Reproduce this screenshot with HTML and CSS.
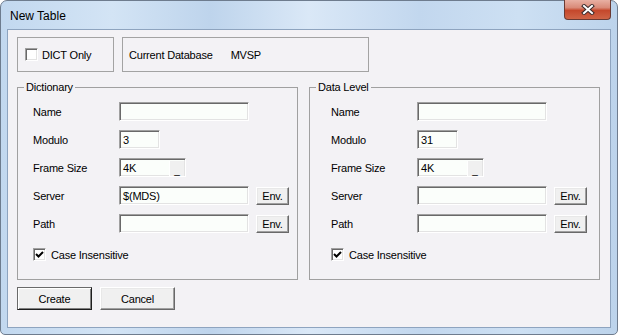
FILE: index.html
```html
<!DOCTYPE html>
<html lang="en">
<head>
    <meta charset="UTF-8">
    <meta name="viewport" content="width=device-width, initial-scale=1.0">
    <title>New Table</title>
    <link rel="stylesheet" href="styles.css">
</head>
<body>
    <div class="window">
        <!-- Title bar -->
        <div class="titlebar">
            <span class="title">New Table</span>
            <span class="close">
                <svg width="14" height="11" viewBox="0 0 14 11">
                    <path d="M3 2 L11 9 M11 2 L3 9" stroke="#3a2a2a" stroke-width="4" stroke-linecap="square"/>
                    <path d="M3 2 L11 9 M11 2 L3 9" stroke="#ffffff" stroke-width="2" stroke-linecap="square"/>
                </svg>
            </span>
        </div>

        <div class="client">
            <div class="top-row">
                <div class="box dict-box">
                    <label class="check"><span class="checkbox"></span>DICT Only</label>
                </div>
                <div class="box db-box">
                    <span>Current Database</span>
                    <span>MVSP</span>
                </div>
            </div>

            <div class="groups">
                <fieldset class="group group-dict">
                    <legend>Dictionary</legend>
                    <div class="rows rows-dict">
                        <div class="row"><span class="label">Name</span><span class="field field-wide"></span></div>
                        <div class="row"><span class="label">Modulo</span><span class="field field-short">3</span></div>
                        <div class="row"><span class="label">Frame Size</span><span class="field field-frame">4K<span class="drop">_</span></span></div>
                        <div class="row"><span class="label">Server</span><span class="field field-wide">$(MDS)</span><span class="btn env">Env.</span></div>
                        <div class="row"><span class="label">Path</span><span class="field field-wide"></span><span class="btn env">Env.</span></div>
                        <label class="check check-row"><span class="checkbox checked">
                            <svg width="9" height="9" viewBox="0 0 9 9"><path d="M1 4 L3.5 6.5 L8 2" stroke="#000" stroke-width="2" fill="none"/></svg>
                        </span>Case Insensitive</label>
                    </div>
                </fieldset>

                <fieldset class="group group-data">
                    <legend>Data Level</legend>
                    <div class="rows rows-data">
                        <div class="row"><span class="label">Name</span><span class="field field-wide"></span></div>
                        <div class="row"><span class="label">Modulo</span><span class="field field-short">31</span></div>
                        <div class="row"><span class="label">Frame Size</span><span class="field field-frame">4K<span class="drop">_</span></span></div>
                        <div class="row"><span class="label">Server</span><span class="field field-wide"></span><span class="btn env">Env.</span></div>
                        <div class="row"><span class="label">Path</span><span class="field field-wide"></span><span class="btn env">Env.</span></div>
                        <label class="check check-row"><span class="checkbox checked">
                            <svg width="9" height="9" viewBox="0 0 9 9"><path d="M1 4 L3.5 6.5 L8 2" stroke="#000" stroke-width="2" fill="none"/></svg>
                        </span>Case Insensitive</label>
                    </div>
                </fieldset>
            </div>

            <div class="buttons">
                <span class="btn action btn-default">Create</span>
                <span class="btn action">Cancel</span>
            </div>
        </div>
    </div>
</body>
</html>
```

FILE: styles.css
```css
/* Page */
body {
    margin: 0;
    background-color: #ffffff;
    font-family: "Liberation Sans", Arial, sans-serif;
    font-size: 11px;
    letter-spacing: -0.2px;
    color: #000;
}

/* Window frame */
.window {
    width: 618px;
    height: 335px;
    box-sizing: border-box;
    border: 1px solid #6e7c8e;
    border-radius: 7px 7px 5px 5px;
    background: linear-gradient(to right, #c2d8ef 0%, #d3e4f5 18%, #bed4ec 34%, #dae8f7 50%, #c2d7ee 68%, #cde0f3 84%, #bcd3eb 100%);
    display: flex;
    flex-direction: column;
}
.titlebar {
    height: 28px;
    display: flex;
    justify-content: space-between;
    align-items: flex-start;
}
.title {
    font-size: 12px;
    letter-spacing: 0;
    line-height: 14px;
    margin: 8px 0 0 9px;
    color: #000;
}
.close {
    width: 47px;
    height: 20px;
    margin: -1px 6px 0 0;
    box-sizing: border-box;
    border: 1px solid #6a3a33;
    border-top: none;
    border-radius: 0 0 4px 4px;
    background: linear-gradient(#e8b0a3, #d98a78 40%, #c5482c 55%, #cf6446 100%);
    display: flex;
    align-items: center;
    justify-content: center;
}

/* Client area */
.client {
    flex: 1;
    margin: 0 6px 6px 6px;
    border: 1px solid #8ea4bf;
    background-color: #f3f2f5;
    padding: 7px 0 0 9px;
}
.top-row {
    display: flex;
    gap: 8px;
}
.box {
    height: 35px;
    box-sizing: border-box;
    border: 1px solid #a3a3a3;
    display: flex;
    align-items: center;
}
.dict-box {
    width: 97px;
    padding-left: 7px;
}
.db-box {
    width: 247px;
    padding-left: 6px;
    gap: 18px;
}

/* Checkboxes */
.check {
    display: flex;
    align-items: center;
    gap: 4px;
}
.checkbox {
    width: 13px;
    height: 13px;
    box-sizing: border-box;
    border: 1px solid;
    border-color: #a0a0a0 #ffffff #ffffff #a0a0a0;
    box-shadow: inset 1px 1px #696969, inset -1px -1px #e3e3e3;
    background-color: #ffffff;
    display: flex;
    align-items: center;
    justify-content: center;
}

/* Group boxes */
.groups {
    display: flex;
    gap: 11px;
    margin-top: 9px;
}
.group {
    margin: 0;
    box-sizing: border-box;
    border: 1px solid #a0a0a0;
    padding: 8px 0 18px 6px;
    min-width: 0;
}
.group legend {
    padding: 0 2px;
    line-height: 13px;
}
.group-dict {
    width: 281px;
}
.group-data {
    width: 291px;
}
.rows {
    display: flex;
    flex-direction: column;
    gap: 9px;
}
.rows-dict {
    padding-left: 9px;
}
.rows-data {
    padding-left: 15px;
}
.row {
    display: flex;
    align-items: center;
    height: 19px;
}
.label {
    width: 86px;
}

/* Sunken edit fields */
.field {
    height: 19px;
    box-sizing: border-box;
    border: 1px solid;
    border-color: #a0a0a0 #ffffff #ffffff #a0a0a0;
    box-shadow: inset 1px 1px #696969, inset -1px -1px #e3e3e3;
    background-color: #fbfefb;
    padding-left: 3px;
    display: flex;
    align-items: center;
}
.field-wide {
    width: 130px;
}
.field-short {
    width: 41px;
}
.field-frame {
    width: 67px;
    justify-content: space-between;
    padding: 2px 1px 1px 3px;
}
.drop {
    width: 15px;
    height: 15px;
    box-sizing: border-box;
    background-color: #f0f0f0;
    border-left: 1px solid #ffffff;
    display: flex;
    align-items: flex-end;
    justify-content: center;
    line-height: 11px;
    font-size: 10px;
}

/* Raised buttons */
.btn {
    box-sizing: border-box;
    border: 1px solid;
    border-color: #ffffff #696969 #696969 #ffffff;
    box-shadow: inset -1px -1px #a0a0a0, inset 1px 1px #e8e8e8;
    background-color: #f0f0f0;
    display: flex;
    align-items: center;
    justify-content: center;
}
.env {
    width: 33px;
    height: 18px;
    margin-left: 7px;
}
.check-row {
    margin-top: 6px;
    gap: 5px;
}
.buttons {
    display: flex;
    gap: 8px;
    margin-top: 7px;
}
.action {
    width: 75px;
    height: 23px;
}
.btn-default {
    border-color: #6a6a6a #1e1e1e #1e1e1e #6a6a6a;
    box-shadow: inset 1px 1px #ffffff, inset -1px -1px #808080;
}
```
